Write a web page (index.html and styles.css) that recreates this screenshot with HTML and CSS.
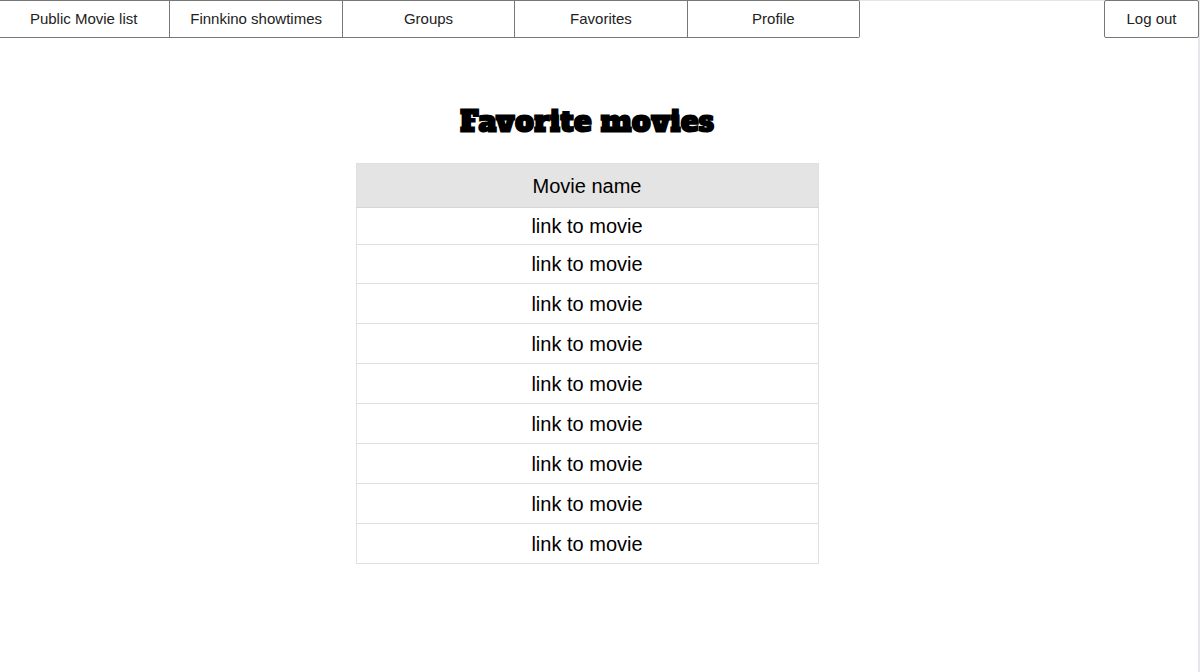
FILE: index.html
```html
<!DOCTYPE html>
<html lang="en">
<head>
<meta charset="utf-8">
<meta name="viewport" content="width=device-width, initial-scale=1">
<title>Favorite movies</title>
<link rel="stylesheet" href="styles.css">
</head>
<body>
<div class="page">
  <header class="topbar">
    <nav class="tabs" aria-label="Main">
      <button type="button" class="tab">Public Movie list</button>
      <button type="button" class="tab">Finnkino showtimes</button>
      <button type="button" class="tab">Groups</button>
      <button type="button" class="tab">Favorites</button>
      <button type="button" class="tab">Profile</button>
    </nav>
    <button type="button" class="logout">Log out</button>
  </header>
  <main class="content">
    <h1 class="title">Favorite movies</h1>
    <table class="movies">
      <thead><tr><th scope="col">Movie name</th></tr></thead>
      <tbody>
        <tr><td><a href="#">link to movie</a></td></tr>
        <tr><td><a href="#">link to movie</a></td></tr>
        <tr><td><a href="#">link to movie</a></td></tr>
        <tr><td><a href="#">link to movie</a></td></tr>
        <tr><td><a href="#">link to movie</a></td></tr>
        <tr><td><a href="#">link to movie</a></td></tr>
        <tr><td><a href="#">link to movie</a></td></tr>
        <tr><td><a href="#">link to movie</a></td></tr>
        <tr><td><a href="#">link to movie</a></td></tr>
      </tbody>
    </table>
  </main>
</div>
</body>
</html>
```
FILE: styles.css
```css
* {
  box-sizing: border-box;
}

body {
  margin: 0;
  background: #fff;
  color: #000;
  font-family: "Liberation Sans", Arial, sans-serif;
}

.page {
  min-height: 100vh;
  border-top: 1px solid #e6e6e6;
  border-right: 2px solid #e4e8ed;
}

.topbar {
  display: flex;
  justify-content: space-between;
  margin: -1px -1px 0 -2px;
}

.tabs {
  display: flex;
  flex: 0 1 862px;
}

.tab,
.logout {
  height: 38px;
  padding: 0 8px;
  border: 1px solid #777;
  background: #fff;
  color: #222;
  font: 15px/18px "Liberation Sans", Arial, sans-serif;
}

.tab {
  flex: 1 1 172px;
  border-left: 0;
}

.tab:last-child {
  border-radius: 0 2px 2px 0;
}

.logout {
  width: 95px;
  border-radius: 2px;
}

.content {
  display: flex;
  flex-direction: column;
  align-items: center;
  padding: 64px 24px 32px 0;
}

.title {
  margin: 0 0 21px;
  font: 900 30px/40px "Alfa Slab One", "DejaVu Serif", serif;
}

.movies {
  width: 463px;
  max-width: 100%;
  border-collapse: collapse;
  font-size: 20px;
  line-height: 24px;
  text-align: center;
}

.movies th,
.movies td {
  height: 40px;
  padding: 0;
  border: 1px solid #e0e0e0;
  font-weight: 400;
}

.movies th {
  height: 44px;
  background: #e4e4e4;
  border-bottom-color: #d6d6d6;
}

.movies tbody tr:first-child td {
  height: 37px;
}

.movies tbody tr:nth-child(2) td {
  height: 39px;
}

.movies a {
  color: inherit;
  text-decoration: none;
}
```
